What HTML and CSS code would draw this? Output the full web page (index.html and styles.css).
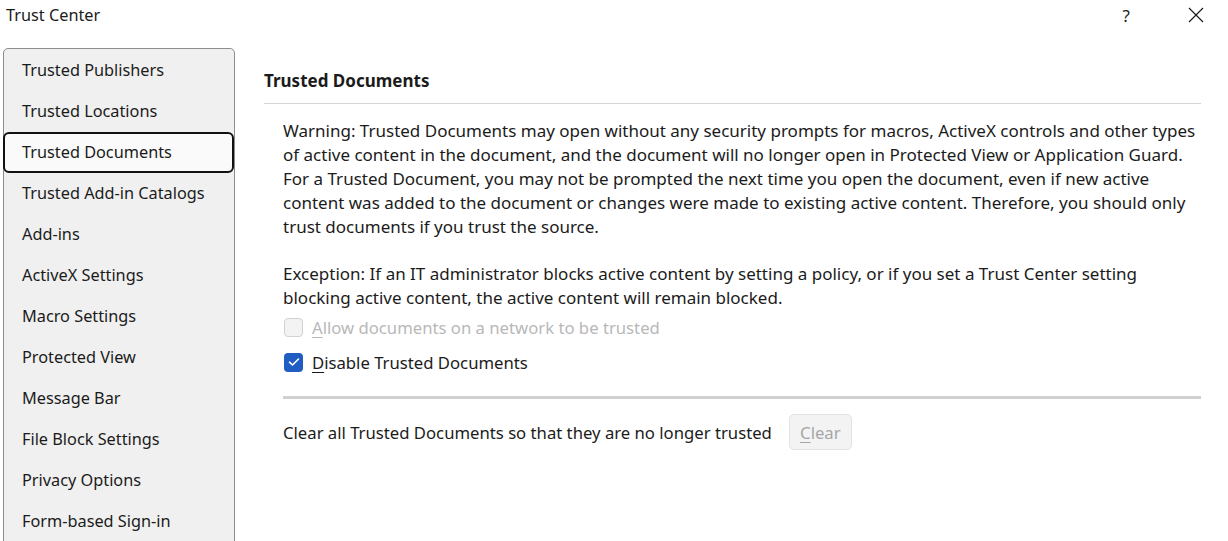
FILE: index.html
```html
<!DOCTYPE html>
<html>
<head>
<meta charset="utf-8">
<link rel="stylesheet" href="styles.css">
</head>
<body>
<div class="titlebar">
  <span class="title">Trust Center</span>
  <div class="controls">
    <span class="help">?</span>
    <svg class="close" width="16" height="16" viewBox="0 0 16 16"><path d="M1 1L15 15M15 1L1 15" stroke="#1a1a1a" stroke-width="1.2" fill="none"/></svg>
  </div>
</div>
<div class="main">
  <nav class="sidebar">
    <div class="item">Trusted Publishers</div>
    <div class="item">Trusted Locations</div>
    <div class="item selected">Trusted Documents</div>
    <div class="item">Trusted Add-in Catalogs</div>
    <div class="item">Add-ins</div>
    <div class="item">ActiveX Settings</div>
    <div class="item">Macro Settings</div>
    <div class="item">Protected View</div>
    <div class="item">Message Bar</div>
    <div class="item">File Block Settings</div>
    <div class="item">Privacy Options</div>
    <div class="item">Form-based Sign-in</div>
  </nav>
  <section class="content">
    <h1 class="heading">Trusted Documents</h1>
    <div class="body">
      <p class="para">Warning: Trusted Documents may open without any security prompts for macros, ActiveX controls and other types of active content in the document, and the document will no longer open in Protected View or Application Guard. For a Trusted Document, you may not be prompted the next time you open the document, even if new active content was added to the document or changes were made to existing active content. Therefore, you should only trust documents if you trust the source.</p>
      <p class="para exception">Exception: If an IT administrator blocks active content by setting a policy, or if you set a Trust Center setting blocking active content, the active content will remain blocked.</p>
      <label class="check disabled"><span class="box"></span><span class="label"><u>A</u>llow documents on a network to be trusted</span></label>
      <label class="check checked"><span class="box"><svg width="12" height="10" viewBox="0 0 12 10"><path d="M1.5 5.2L4.5 8L10.5 2" stroke="#fff" stroke-width="1.6" fill="none" stroke-linecap="round" stroke-linejoin="round"/></svg></span><span class="label"><u>D</u>isable Trusted Documents</span></label>
      <div class="sep"></div>
      <div class="clear-row">
        <span>Clear all Trusted Documents so that they are no longer trusted</span>
        <button class="btn" disabled><u>C</u>lear</button>
      </div>
    </div>
  </section>
</div>
</body>
</html>
```

FILE: styles.css
```css
* { box-sizing: border-box; }
html, body { margin: 0; padding: 0; background: #ffffff; }
body {
  font-family: "Noto Sans", "Open Sans", sans-serif;
  font-size: 16.3px;
  color: #1b1b1b;
  width: 1228px;
  height: 541px;
  overflow: hidden;
}
.titlebar {
  height: 30px;
  display: flex;
  align-items: center;
  justify-content: space-between;
  padding-left: 6px;
}
.title { font-size: 16.3px; }
.controls {
  display: flex;
  align-items: center;
  gap: 58px;
  padding-right: 24px;
}
.help { font-size: 17px; color: #222; }
.close { display: block; }
.main {
  display: flex;
  align-items: flex-start;
  margin-top: 18px;
}
.sidebar {
  margin-left: 3px;
  width: 232px;
  height: 520px;
  background: #f0f0f0;
  border: 1px solid #8d8d8d;
  border-radius: 5px 5px 0 0;
  padding-top: 1px;
}
.item {
  height: 41px;
  line-height: 41px;
  padding-left: 18px;
  white-space: nowrap;
}
.item.selected {
  margin-left: -1px;
  border: 2px solid #111;
  border-radius: 6px;
  background: #fafafa;
  line-height: 37px;
  padding-left: 17px;
}
.content {
  flex: 1;
  padding-left: 29px;
  padding-right: 27px;
}
.heading {
  margin: 0;
  font-size: 17px;
  font-weight: 700;
  height: 56px;
  line-height: 25px;
  padding-top: 20px;
  border-bottom: 1px solid #d4d4d4;
}
.body { padding-left: 19px; padding-top: 15px; }
.para {
  margin: 0;
  font-size: 17px;
  line-height: 24px;
}
.exception { margin-top: 23px; }
.check {
  display: flex;
  align-items: center;
  height: 28px;
  gap: 9px;
  font-size: 16.7px;
}
.check.disabled { margin-top: 3px; color: #b8b8b8; }
.check.checked { margin-top: 7px; }
.box {
  width: 19px;
  height: 19px;
  border-radius: 4px;
  display: flex;
  align-items: center;
  justify-content: center;
  margin-left: 1px;
}
.disabled .box { border: 1px solid #d2d2d2; background: #f3f3f3; }
.checked .box { background: #1f5dc3; }
.label u { text-decoration-thickness: 1px; text-underline-offset: 3px; }
.sep {
  height: 3px;
  background: #d0d0d0;
  margin-top: 20px;
}
.clear-row {
  display: flex;
  align-items: center;
  gap: 17px;
  margin-top: 15px;
  font-size: 16.7px;
}
.btn {
  font-family: inherit;
  font-size: 16.7px;
  width: 63px;
  height: 36px;
  border: 1px solid #e2e2e2;
  border-radius: 5px;
  background: #f3f3f3;
  color: #a6a6a6;
}
.btn u { text-underline-offset: 3px; }
```
